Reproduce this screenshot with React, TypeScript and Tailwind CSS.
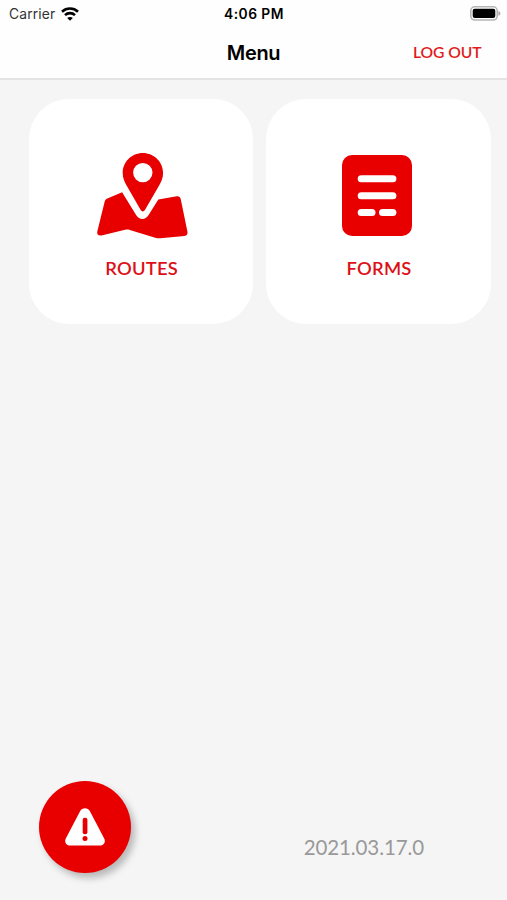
import React from 'react';

interface MenuCardProps {
  label: string;
  icon: React.ReactNode;
}

const WifiIcon: React.FC = () => (
  <svg className="w-[18px] h-[14px]" viewBox="0 0 18 14" fill="none" stroke="#000" strokeWidth="2.6">
    <path d="M1 4.7C5.5 .5 12.5 .5 17 4.7" />
    <path d="M4 8.1c2.8-2.7 7.2-2.7 10 0" />
    <path d="M9 13.7 6.2 11c1.5-1.4 4.1-1.4 5.6 0z" fill="#000" stroke="none" />
  </svg>
);

const BatteryIcon: React.FC = () => (
  <svg className="w-[31px] h-[15px] -mt-[2px]" viewBox="0 0 31 15">
    <rect x=".8" y=".8" width="26.4" height="13.2" rx="4" fill="#fff" stroke="#b5b5b5" strokeWidth="1.6" />
    <rect x="2.7" y="2.8" width="22.6" height="9.3" rx="2" fill="#000" />
    <path d="M28.4 5c2.6.8 2.6 4 0 4.8z" fill="#a8a8a8" />
  </svg>
);

const RoutesIcon: React.FC = () => (
  <svg className="w-[92px] h-[88px] ml-[2px]" viewBox="0 0 92 88" fill="#e80000">
    <path
      fillRule="evenodd"
      d="M46.8 1C35.5 1 26.7 10 26.7 21c0 5.5 2 9.4 4.6 13.8L44.7 58.1c1 1.7 3.2 1.7 4.2 0l13.5-23.3C65 30.4 67.1 26.5 67.1 21c0-11-9-20-20.3-20zm0 9.9a9.7 9.7 0 1 1 0 19.4 9.7 9.7 0 0 1 0-19.4z"
    />
    <path d="M11.4 46.4 26.1 40.2l14 22.7c3.3 5.4 9.2 5.4 12.5 0l9.7-15.3 18.5-3.4c2-.3 3.3.6 3.8 2.4l6.9 33.4c.4 2.1-.9 3.8-3 4L64.2 86.2c-1.9.2-3.2 0-5-.5L33.8 77.9c-1.6-.5-3-.5-4.7-.2L5.5 83.4c-2.9.6-4.9-1.2-4.2-4L8.7 49.6c.4-1.6 1.1-2.5 2.7-3.2z" />
  </svg>
);

const FormsIcon: React.FC = () => (
  <svg className="w-[70px] h-[81px] mr-[3px]" viewBox="0 0 70 81">
    <rect width="70" height="81" rx="10" fill="#e80000" />
    <g fill="#fff">
      <rect x="15.7" y="20.3" width="38.7" height="7" rx="3.5" />
      <rect x="15.7" y="37.2" width="38.7" height="7" rx="3.5" />
      <rect x="15.7" y="54.1" width="17.8" height="7" rx="3.5" />
      <rect x="37" y="54.1" width="17.4" height="7" rx="3.5" />
    </g>
  </svg>
);

const AlertIcon: React.FC = () => (
  <svg className="w-10 h-[38px]" viewBox="0 0 40 38">
    <path
      d="M15.2 3c2-3.8 7.6-3.8 9.6 0l14.4 27.4c1.8 3.6-.4 7.1-4.4 7.1H5.2c-4 0-6.2-3.5-4.4-7.1z"
      fill="#fff"
    />
    <rect x="17.7" y="9.8" width="4.7" height="16.4" rx="2" fill="#e80000" />
    <circle cx="20" cy="30.6" r="2.5" fill="#e80000" />
  </svg>
);

const MenuCard: React.FC<MenuCardProps> = ({ label, icon }) => (
  <button className="flex flex-col items-center h-[225px] pt-[53px] bg-white rounded-[40px]">
    <span className="flex items-center justify-center h-[88px]">{icon}</span>
    <span className="mt-[17px] ml-[2px] text-[17px] leading-6 font-semibold tracking-[0.2px] scale-x-[1.08] text-[#dc1018]">
      {label}
    </span>
  </button>
);

export default function App() {
  return (
    <div className="flex flex-col w-full h-screen overflow-hidden bg-[#f5f5f5] font-[Lato,sans-serif]">
      <header className="h-20 shrink-0 bg-[#fefefe] border-b-2 border-[#e3e3e3] font-[Inter,sans-serif] text-black">
        <div className="grid grid-cols-3 items-center h-7 pl-[9px] pr-[6px]">
          <div className="flex items-center gap-[6px] text-[13.8px] tracking-[0.15px] text-[#333]">
            <span>Carrier</span>
            <WifiIcon />
          </div>
          <div className="text-center text-[13.8px] font-semibold tracking-[0.45px] -ml-[2px] whitespace-nowrap">
            4:06 PM
          </div>
          <div className="flex justify-end">
            <BatteryIcon />
          </div>
        </div>
        <div className="grid grid-cols-3 items-center h-12 pt-px px-[25px]">
          <span />
          <h1 className="text-center text-[20px] font-semibold tracking-[-0.35px]">Menu</h1>
          <button className="justify-self-end origin-right scale-x-[1.08] text-[14.5px] font-semibold font-[Lato,sans-serif] tracking-[-0.05px] text-[#e01b20]">
            LOG OUT
          </button>
        </div>
      </header>

      <main className="grid grid-cols-2 gap-[13px] pt-[18.5px] pl-[28.5px] pr-[16.5px]">
        <MenuCard label="ROUTES" icon={<RoutesIcon />} />
        <MenuCard label="FORMS" icon={<FormsIcon />} />
      </main>

      <footer className="flex items-center justify-between mt-auto pl-[39px] pr-[83px] pb-[27px]">
        <button
          aria-label="Alert"
          className="flex items-center justify-center w-[92px] h-[92px] rounded-full bg-[#e80000] shadow-[4px_5px_7px_rgba(0,0,0,0.25)]"
        >
          <AlertIcon />
        </button>
        <span className="mt-[39px] text-[20.5px] leading-6 tracking-[-0.1px] text-[#999]">2021.03.17.0</span>
      </footer>
    </div>
  );
}
